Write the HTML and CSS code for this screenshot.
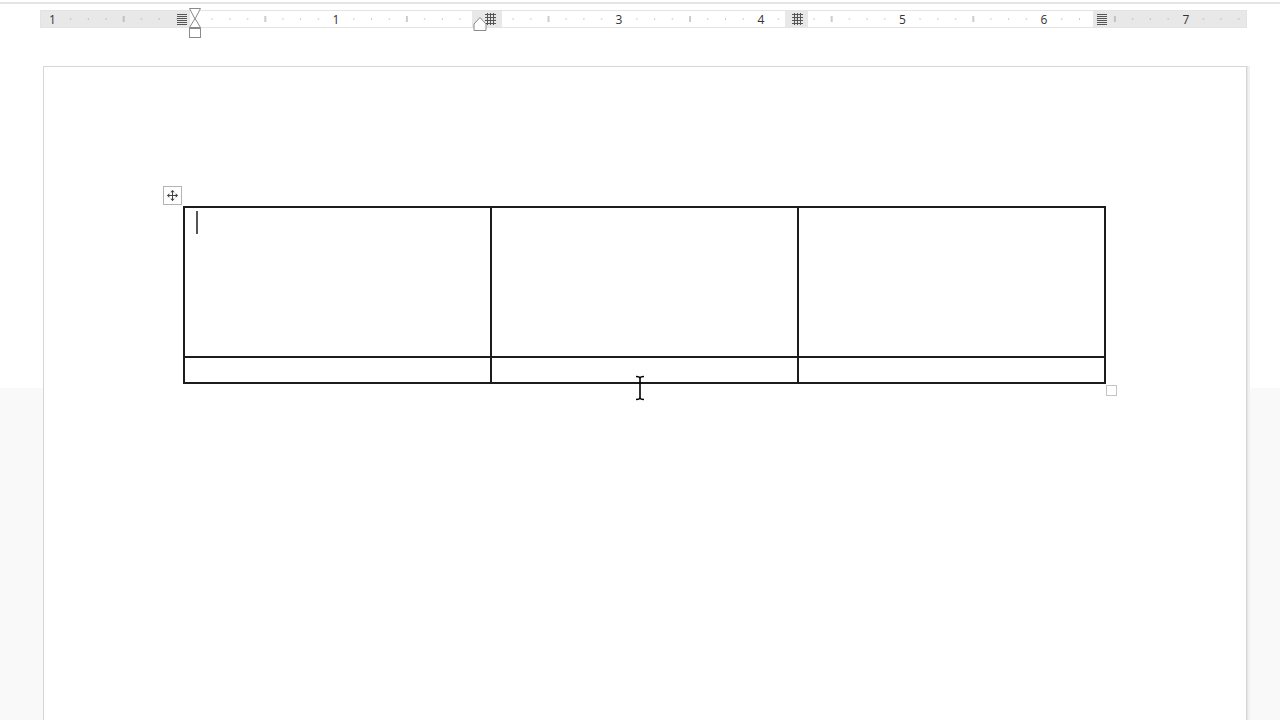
FILE: index.html
```html
<!DOCTYPE html>
<html>
<head>
<meta charset="utf-8">
<link rel="stylesheet" href="styles.css">
</head>
<body>
<div class="topline"></div>
<svg class="ruler" width="1280" height="42" viewBox="0 0 1280 42">
  <defs>
    <pattern id="ticks" patternUnits="userSpaceOnUse" x="194.5" y="0" width="141.6" height="42">
      <rect x="17.2" y="18.5" width="1" height="1" fill="#9a9a9a"/>
      <rect x="34.9" y="18.5" width="1" height="1" fill="#9a9a9a"/>
      <rect x="52.6" y="18.5" width="1" height="1" fill="#9a9a9a"/>
      <rect x="70.3" y="16" width="1" height="6" fill="#9a9a9a"/>
      <rect x="88" y="18.5" width="1" height="1" fill="#9a9a9a"/>
      <rect x="105.7" y="18.5" width="1" height="1" fill="#9a9a9a"/>
      <rect x="123.4" y="18.5" width="1" height="1" fill="#9a9a9a"/>
    </pattern>
  </defs>
  <rect x="40.5" y="10.5" width="1206" height="17" fill="#fff" stroke="#e3e3e3"/>
  <rect x="41" y="11" width="149" height="16" fill="#e8e8e8"/>
  <rect x="472" y="11" width="30" height="16" fill="#e8e8e8"/>
  <rect x="785" y="11" width="23" height="16" fill="#e8e8e8"/>
  <rect x="1093" y="11" width="153" height="16" fill="#e8e8e8"/>
  <rect x="41" y="11" width="1205" height="16" fill="url(#ticks)"/>
  <g class="num">
    <text x="52.5" y="24">1</text>
    <text x="336" y="24">1</text>
    <text x="619" y="24">3</text>
    <text x="761" y="24">4</text>
    <text x="902.5" y="24">5</text>
    <text x="1044" y="24">6</text>
    <text x="1186" y="24">7</text>
  </g>
  <g stroke="#555" stroke-width="1">
    <path d="M177 14.5h10M177 16.5h10M177 18.5h10M177 20.5h10M177 22.5h10M177 24.5h10"/>
    <path d="M1097 14.5h10M1097 16.5h10M1097 18.5h10M1097 20.5h10M1097 22.5h10M1097 24.5h10"/>
    <path d="M485 14.5h11M485 17.5h11M485 20.5h11M485 23.5h11M487.5 13v12M490.5 13v12M493.5 13v12"/>
    <path d="M792 14.5h11M792 17.5h11M792 20.5h11M792 23.5h11M794.5 13v12M797.5 13v12M800.5 13v12"/>
  </g>
  <g fill="#fff" stroke="#8a8a8a" stroke-width="1">
    <path d="M189.5 8.5h11l-5.5 10.5z"/>
    <path d="M195 18.5l-5.5 9h11z"/>
    <rect x="189.5" y="28.5" width="11" height="9"/>
    <path d="M480 17.5l-6 6.5v6.5h12v-6.5z"/>
  </g>
</svg>

<div class="page">
  <div class="table-wrap">
    <div class="move-handle">
      <svg width="11" height="11" viewBox="0 0 11 11">
        <path d="M5.5 0.5v10M0.5 5.5h10" stroke="#444" stroke-width="1"/>
        <path d="M5.5 0l-2.2 2.3h4.4zM5.5 11l-2.2-2.3h4.4zM0 5.5l2.3-2.2v4.4zM11 5.5l-2.3-2.2v4.4z" fill="#444"/>
      </svg>
    </div>
    <div class="grid-table">
      <div class="cell tall"><span class="caret"></span></div>
      <div class="cell tall"></div>
      <div class="cell tall"></div>
      <div class="cell short"></div>
      <div class="cell short"></div>
      <div class="cell short"></div>
    </div>
    <div class="resize-handle"></div>
    <svg class="ibeam" width="12" height="26" viewBox="0 0 12 26">
      <path d="M2 1.5c2 0 4 0 4 2v19c0 2-2 2-4 2M10 1.5c-2 0-4 0-4 2v19c0 2 2 2 4 2" fill="none" stroke="#000" stroke-width="1.6"/>
    </svg>
  </div>
</div>
</body>
</html>
```

FILE: styles.css
```css
html, body {
  margin: 0;
  padding: 0;
}
body {
  width: 1280px;
  height: 720px;
  overflow: hidden;
  background: linear-gradient(#ffffff 0, #ffffff 388px, #f9f9f9 388px, #f9f9f9 100%);
  font-family: "Open Sans", "Noto Sans", sans-serif;
}
.topline {
  height: 2px;
  margin-top: 2px;
  background: #e4e4e4;
}
.ruler {
  display: block;
  margin-top: -4px;
}
.num text {
  font-family: "Open Sans", "Noto Sans", sans-serif;
  font-size: 12px;
  fill: #333;
  text-anchor: middle;
}
.page {
  margin-top: 24px;
  margin-left: 43px;
  width: 1204px;
  height: 690px;
  background: #fff;
  border: 1px solid #d6d6d6;
  box-shadow: 1px 0 0 #e6e6e6, 3px 0 0 #f1f1f1;
  padding: 139px 0 0 139px;
  box-sizing: border-box;
}
.table-wrap {
  position: relative;
  width: 923px;
}
.grid-table {
  display: grid;
  grid-template-columns: 307px 307px 307px;
  grid-template-rows: 150px 26px;
  border-left: 2px solid #1c1c1c;
  border-top: 2px solid #1c1c1c;
}
.cell {
  border-right: 2px solid #1c1c1c;
  border-bottom: 2px solid #1c1c1c;
  box-sizing: border-box;
  padding: 3px 0 0 11px;
}
.caret {
  display: block;
  width: 2px;
  height: 23px;
  background: #555;
}
.move-handle {
  position: absolute;
  left: -20px;
  top: -20px;
  width: 17px;
  height: 17px;
  border: 1px solid #b4b4b4;
  background: #fff;
  display: flex;
  align-items: center;
  justify-content: center;
}
.resize-handle {
  position: absolute;
  right: -11px;
  bottom: -12px;
  width: 9px;
  height: 9px;
  border: 1px solid #c4c4c4;
  background: #fff;
}
.ibeam {
  position: absolute;
  left: 451px;
  top: 169px;
}
```
